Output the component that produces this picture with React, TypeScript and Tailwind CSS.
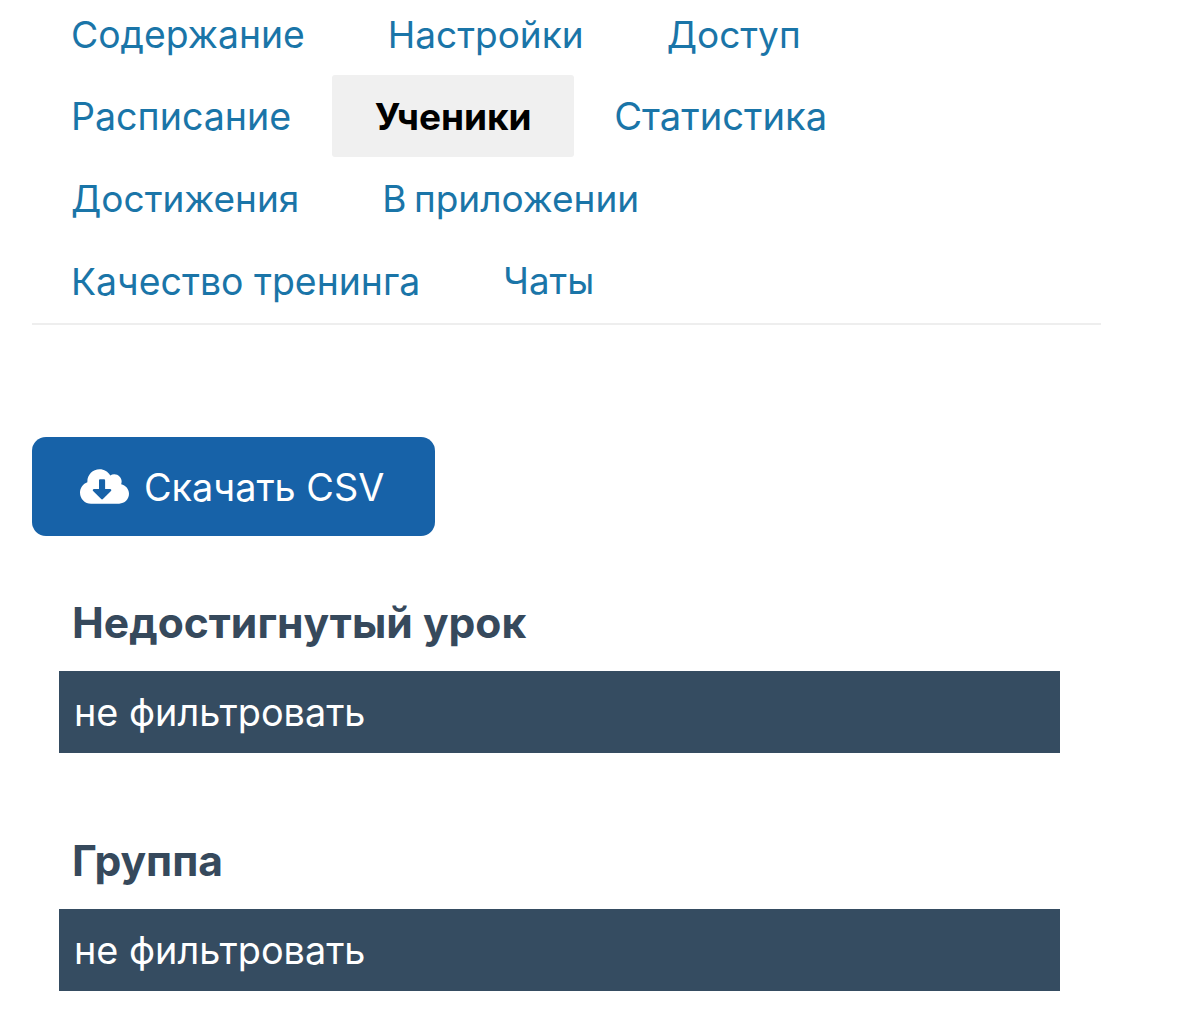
import type { ReactNode } from "react";
import { FaCloudDownloadAlt } from "react-icons/fa";

function Tab({ label, className }: { label: string; className: string }) {
  return <span className={"leading-none text-[#1a75a8] whitespace-nowrap " + className}>{label}</span>;
}

function TabRow({ children }: { children: ReactNode }) {
  return <div className="flex h-[82.5px] items-center gap-[83px]">{children}</div>;
}

function FilterBlock({ title }: { title: string }) {
  return (
    <div className="mb-[83px] ml-[59px] w-[1001px]">
      <div className="mb-[23px] pl-[13px] text-[42.6px] leading-[50px] font-bold text-[#36495c]">{title}</div>
      <div className="flex h-[82px] items-center bg-[#354c61] pt-[2px] pl-[15px] text-[37.8px] text-white">не фильтровать</div>
    </div>
  );
}

export default function App() {
  return (
    <div className="h-[1014px] w-[1200px] overflow-hidden bg-white font-['Inter','Noto_Sans',sans-serif]">
      <div className="ml-[32px] w-[1069px] border-b-2 border-[#eeeeee] pl-[39px]">
        <div className="mb-[6px] flex h-[69px] items-center gap-[83px]">
          <Tab label="Содержание" className="text-[37.3px]" />
          <Tab label="Настройки" className="text-[37px]" />
          <Tab label="Доступ" className="text-[37px]" />
        </div>
        <div className="flex h-[82.5px] items-center gap-[41px]">
          <Tab label="Расписание" className="pt-[2px] text-[37.6px]" />
          <div className="-mr-px flex h-[82px] w-[242px] items-center justify-center rounded-[3px] bg-[#f0f0f0] text-[37px] font-bold text-black">Ученики</div>
          <Tab label="Статистика" className="text-[38.2px]" />
        </div>
        <TabRow>
          <Tab label="Достижения" className="text-[37px]" />
          <Tab label="В приложении" className="text-[37px] [word-spacing:-3px]" />
        </TabRow>
        <TabRow>
          <Tab label="Качество тренинга" className="text-[37.4px]" />
          <Tab label="Чаты" className="text-[36.7px]" />
        </TabRow>
      </div>
      <div className="ml-[32px] mt-[112px] mb-[62px] flex h-[99px] w-[403px] items-center gap-[15px] rounded-[14px] bg-[#1762a8] pl-[48px] text-[37.8px] text-white">
        <FaCloudDownloadAlt size={49} />
        <span className="pt-[2px]">Скачать CSV</span>
      </div>
      <FilterBlock title="Недостигнутый урок" />
      <FilterBlock title="Группа" />
    </div>
  );
}
